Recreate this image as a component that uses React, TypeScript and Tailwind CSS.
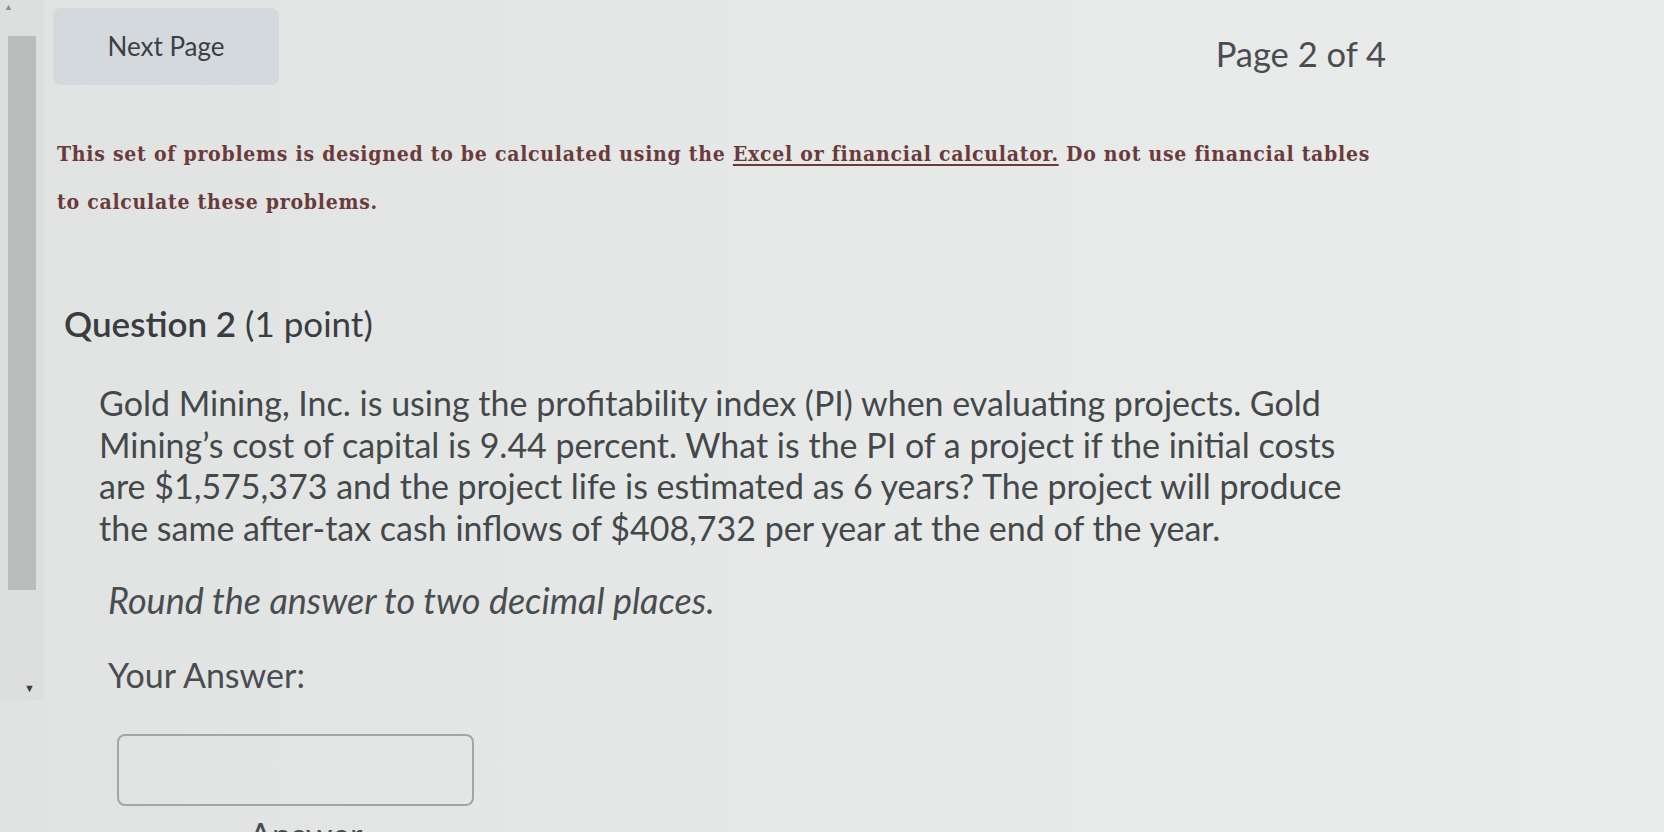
const lato = { fontFamily: 'Lato, "Open Sans", sans-serif' };

const ScrollStrip = () => (
  <div className="relative w-[44px] shrink-0 h-[700px] bg-[#dcdfde]">
    <span className="absolute left-[4px] top-[2px] text-[9px] leading-none text-[#8a8d8c]">▲</span>
    <div className="absolute left-[8px] top-[36px] w-[28px] h-[554px] bg-[#b9bdbc]" />
    <span className="absolute left-[24px] top-[682px] text-[11px] leading-none text-[#3c3f40]">▼</span>
  </div>
);

export default function App() {
  return (
    <div className="w-full h-[832px] overflow-hidden flex bg-gradient-to-r from-[#e0e3e2] via-[#e6e9e8] to-[#e9ecea]" style={lato}>
      <ScrollStrip />
      <div className="flex flex-col pl-[9px]">
        <div className="flex items-start justify-between w-[1333px] pt-[8px]">
          <button className="w-[226px] h-[77px] rounded-lg bg-[#d4d9dd] text-[26px] text-[#3b3f43]">
            Next Page
          </button>
          <div className="pt-[24px] text-[34.5px] leading-[44px] text-[#4a4d50]">Page 2 of 4</div>
        </div>

        <div
          className="pl-[4px] mt-[45px] font-bold text-[21px] leading-[48px] tracking-[0.75px] text-[#6b3a3b]"
          style={{ fontFamily: '"DejaVu Serif Condensed", "DejaVu Serif", serif' }}
        >
          <div className="whitespace-nowrap">
            This set of problems is designed to be calculated using the{' '}
            <span className="underline underline-offset-[3px]">Excel or financial calculator.</span> Do not use financial tables
          </div>
          <div className="whitespace-nowrap">to calculate these problems.</div>
        </div>

        <h2 className="pl-[11px] mt-[76px] text-[35px] leading-[42px] text-[#3a3d40]">
          <span className="font-semibold">Question 2</span> (1 point)
        </h2>

        <p className="pl-[46px] mt-[38px] text-[34px] leading-[41.5px] text-[#45484b] whitespace-nowrap">
          Gold Mining, Inc. is using the profitability index (PI) when evaluating projects. Gold
          <br />
          Mining’s cost of capital is 9.44 percent. What is the PI of a project if the initial costs
          <br />
          are $1,575,373 and the project life is estimated as 6 years? The project will produce
          <br />
          the same after-tax cash inflows of $408,732 per year at the end of the year.
        </p>

        <p className="pl-[55px] mt-[31px] italic text-[36px] leading-[42px] text-[#4a4d50]">
          Round the answer to two decimal places.
        </p>

        <p className="pl-[55px] mt-[34px] text-[34px] leading-[40px] text-[#4a4d50]">Your Answer:</p>

        <div className="pl-[64px] mt-[39px]">
          <input
            className="block w-[357px] h-[72px] rounded-lg border-2 border-[#a3a6a7] bg-transparent outline-none"
            aria-label="Your Answer"
          />
        </div>

        <div className="pl-[196px] mt-[9px] text-[34px] leading-[40px] text-[#4a4d50]">Answer</div>
      </div>
    </div>
  );
}
